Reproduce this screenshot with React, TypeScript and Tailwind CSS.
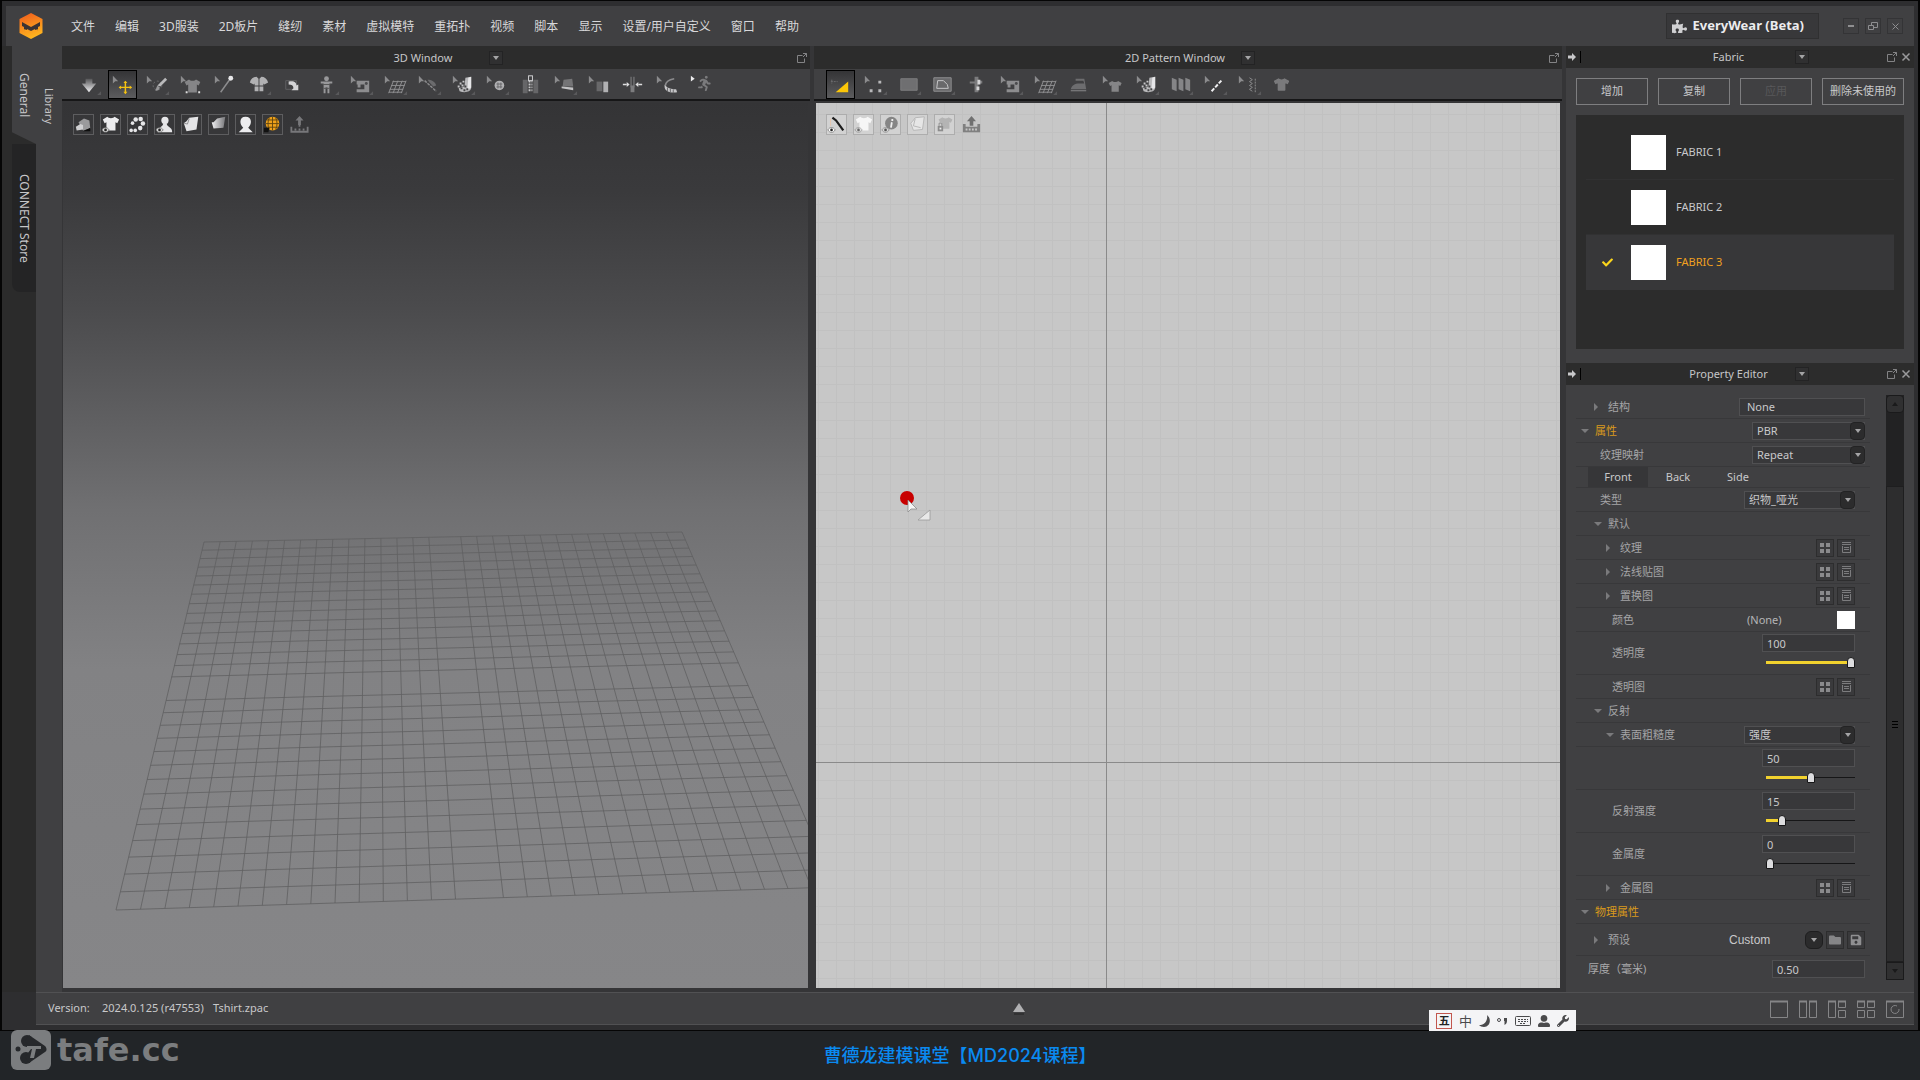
import React, { useState } from "react";
import { FaRunning, FaFolder, FaSave, FaUserAlt, FaWrench, FaCheck, FaPuzzlePiece, FaTshirt } from "react-icons/fa";

/* ---------- shared glyph parts ---------- */

const Cursor = ({ fill = "#8b8b8d" }: { fill?: string }) => <path d="M4 5v8l2.500-2.500h3z" fill={fill} />;
const Corner = () => <path d="M27 21v4h-4z" fill="#59595b" />;
const SHIRT = "M5 3L0 6l2 4 2-1v9h10V9l2 1 2-4-5-3c-1 2-7 2-8 0z";

const Machine = () => (
  <g fill="#8d8d8f">
    <path d="M10 10h13v12H10v-3h8v-5h-4v3h-3v-3h-1z" />
    <circle cx="20" cy="13" r="1.500" fill="#4a4a4c" />
  </g>
);
const Mesh = () => (
  <path d="M12 11h14M10.500 15h14M9 19h14M8 22h14M13 10L8 23M17.500 10l-5 13M22 10l-5 13M26 10l-5 13" stroke="#8f8f91" strokeWidth="1" fill="none" />
);
const Boot = () => (
  <g>
    <path d="M17 7l6-1v12c-1 4-7 5-12 3l-1-3 6-2z" fill="#b9b9bb" />
    <path d="M20 7l3-1v11l-4 3z" fill="#e6e6e8" />
    <path d="M11 12h2v2h-2zM14 10h2v2h-2zM13 14h2v2h-2zM9 15h2v2H9z" fill="#c6c6c8" />
    <path d="M12 17h2v2h-2zM15 19h2v2h-2zM16 15h2v2h-2zM18 18h2v2h-2z" fill="#444446" />
  </g>
);

const icons3D: { name: string; art: React.ReactNode }[] = [
  { name: "Simulate", art: <><path d="M11 8h7v5h4l-7.500 9L7 13h4z" fill="url(#fadeUp)" /><Corner /></> },
  { name: "Select/Move", art: <><Cursor /><path d="M17 11v12M11 17h12" stroke="#f5c211" strokeWidth="1.500" /><path d="M17 10l2 2.500h-4zM17 24l2-2.500h-4zM10 17l2.500-2v4zM24 17l-2.500-2v4z" fill="#f5c211" /></> },
  { name: "Brush select", art: <><Cursor /><circle cx="15" cy="15" r="4.500" fill="none" stroke="#707072" strokeDasharray="2 2" /><path d="M23 7l2 2-7 7-3-1z" fill="#b9b9bb" /><path d="M15 15l2.500 2c-1 3-3 4-5 3 1.500-1 1-3 2.500-5z" fill="#98989a" /><Corner /></> },
  { name: "Move garment", art: <><Cursor /><g transform="translate(8 6) scale(.9)"><path d={SHIRT} fill="#858587" /></g><path d="M9 21h2v2H9zM22 21h2v2h-2z" fill="#ddd" /></> },
  { name: "Pin", art: <><Cursor /><path d="M10 22L20 8" stroke="#8d8d8f" strokeWidth="1.500" /><circle cx="20.500" cy="7.500" r="2.500" fill="#e8e8ea" /></> },
  { name: "Arrange", art: <><path d="M12 6c-3 0-6 2-7 6l4 2 1-1v2h4V8zM17 6c3 0 6 2 7 6l-4 2-1-1v2h-4V8zM10 16h4v5h-4zM15 16h4v5h-4z" fill="#b1b1b3" /><Corner /></> },
  { name: "Fold", art: <><path d="M7 10h11v9H7z" fill="none" stroke="#616163" /><path d="M10 11c6-1 8 1 8 4l2-1v6h-7l2-2c0-3-2-4-5-4z" fill="#d4d4d6" /></> },
  { name: "Avatar", art: <><circle cx="14" cy="8" r="2.500" fill="#98989a" /><path d="M8 11h12v2h-3v10h-2v-6h-2v6h-2V13H8z" fill="#98989a" /><path d="M10 14h8M11 18h6" stroke="#555" /><Corner /></> },
  { name: "Sewing", art: <><Cursor /><Machine /><Corner /></> },
  { name: "Mesh", art: <><Cursor /><Mesh /><Corner /></> },
  { name: "Stitch", art: <><Cursor /><path d="M10 10l12 11" stroke="#8a8a8c" strokeWidth="1.500" strokeDasharray="3 1" /><path d="M13 9c4 0 8 2 9 6l-3 1-4-4z" fill="#6b6b6d" /><Corner /></> },
  { name: "Texture", art: <><Cursor /><Boot /><Corner /></> },
  { name: "Button", art: <><Cursor /><circle cx="17" cy="15" r="5" fill="#b1b1b3" /><path d="M15.500 12v6M18.500 12v6M14 13.500h6M14 16.500h6" stroke="#6a6a6c" /><Corner /></> },
  { name: "Zipper", art: <><path d="M6 9h5v14H6zM17 9h5v14h-5z" fill="#666668" /><path d="M12 11h4M12 14h4M12 17h4M12 20h4" stroke="#c6c6c8" strokeDasharray="2 1" strokeWidth="2" /><rect x="12" y="5" width="4" height="5" fill="none" stroke="#d4d4d6" /></> },
  { name: "Pleat", art: <><Cursor /><path d="M13 9l9-1 1 8H12z" fill="#747476" /><path d="M11 16l12 1v3l-12-2z" fill="#c2c2c4" /><Corner /></> },
  { name: "Layers", art: <><Cursor /><path d="M12 11h6v10h-6z" fill="#68686a" /><path d="M19 11h5v11h-5z" fill="#b1b1b3" /></> },
  { name: "Measure", art: <><path d="M4 14h4M24 14h-4" stroke="#dededf" strokeWidth="1.500" /><path d="M11 14l-3-2.500v5zM17 14l3-2.500v5z" fill="#dededf" /><path d="M12.500 6v11M15.500 6v11" stroke="#858587" /><path d="M12 15h4v7h-4z" fill="#7c7c7e" /></> },
  { name: "Tape", art: <><Cursor /><path d="M22 8c-6 1-9 3-9 7" stroke="#8b8b8d" strokeWidth="1.500" fill="none" /><path d="M12 14c3 4 7 5 12 5l1 3c-7 1-13-1-13-6z" fill="#c6c6c8" /><path d="M15 17v4M18 18v4M21 19v4" stroke="#68686a" /></> },
  { name: "Walk", art: <><path d="M4 5v6l4-3z" fill="#ededef" /><FaRunning x="10" y="5" width="19" height="19" color="#7a7a7c" /></> },
];

const icons2D: { name: string; art: React.ReactNode }[] = [
  { name: "Transform pattern", art: <><path d="M4 11h7M5 9v4" stroke="#6d6d6f" strokeDasharray="2 1" /><path d="M22 11v11H9z" fill="#fbc608" /></> },
  { name: "Edit pattern", art: <><Cursor /><path d="M9 19h3v3H9zM18 19h3v3h-3zM18 10h3v3h-3z" fill="#b8b8ba" /><Corner /></> },
  { name: "Polygon", art: <><path d="M6 8h17v12H6z" fill="#6f6f71" stroke="#7c7c7e" /><Corner /></> },
  { name: "Internal shape", art: <><path d="M5 7h18v14H5z" fill="#69696b" stroke="#8f8f91" /><path d="M9 10h6l4 4 1 4H8z" fill="none" stroke="#c8c8ca" /><Corner /></> },
  { name: "Trace", art: <><path d="M12 6h4v4h4v3h-4v9h-4v-9H7v-2h5z" fill="#7a7a7c" /><path d="M15 9h3v5h-3zM14 16h3v4h-3z" fill="#d5d5d7" /></> },
  { name: "Sewing", art: <><Cursor /><Machine /><Corner /></> },
  { name: "Mesh", art: <><Cursor /><Mesh /><Corner /></> },
  { name: "Iron", art: <><path d="M6 19c1-4 4-6 9-6h5l-1-3h-8V8h9l2 11z" fill="#6d6d6f" /><path d="M6 20h16v1H6z" fill="#8b8b8d" /></> },
  { name: "Garment", art: <><Cursor /><g transform="translate(10 8) scale(.75)"><path d={SHIRT} fill="#858587" /></g></> },
  { name: "Texture", art: <><Cursor /><Boot /><Corner /></> },
  { name: "Pleats", art: <><path d="M5 7l5 2v12l-5-2zM12 7l5 2v12l-5-2zM19 7l5 2v12l-5-2z" fill="#858587" /><Corner /></> },
  { name: "Seam line", art: <><Cursor /><path d="M11 21L22 9" stroke="#f0f0f2" strokeWidth="2" strokeDasharray="4 1.500" /><Corner /></> },
  { name: "Puckering", art: <><Cursor /><path d="M15 7l3 2-3 2 3 2-3 2 3 2-3 2 3 2" fill="none" stroke="#8b8b8d" /><path d="M21 8v14" stroke="#8b8b8d" strokeDasharray="2 1" /><Corner /></> },
  { name: "Show garment", art: <FaTshirt x="5" y="6" width="19" height="17" color="#7a7a7c" /> },
];

const Eye = ({ fill = "#d8d8d8" }: { fill?: string }) => (
  <g><path d="M1 16.500c2-3.500 6-3.500 8 0-2 3.500-6 3.500-8 0z" fill={fill} stroke="#444" strokeWidth=".6" /><circle cx="5" cy="16.500" r="1.500" fill="#222" /></g>
);
const Dish = ({ fill }: { fill: string }) => (
  <path d="M1.500 13v5.500h18V13M5 16h2M9.500 16h2M14 16h2M10.500 13V6" fill="none" stroke={fill} strokeWidth="2" />
);

const view3D: { name: string; art: React.ReactNode; bare?: boolean }[] = [
  { name: "Surface", art: <><path d="M5 8l6-4 6 2 1 9-8 2z" fill="#9a9a9c" /><path d="M2 13l5-3 3 1v5l-7 1z" fill="#d0d0d2" /><path d="M10 18l8-4v4z" fill="#0d0d0d" /></> },
  { name: "Garment", art: <><g transform="translate(2 -1)"><path d={SHIRT} fill="#ececee" /></g><Eye /></> },
  { name: "Points", art: <g fill="#e6e6e8"><circle cx="8.500" cy="5" r="2.500" /><circle cx="14" cy="4.500" r="2.500" /><circle cx="16.500" cy="9.500" r="2.500" /><circle cx="13.500" cy="14.500" r="2.500" /><circle cx="5" cy="9" r="2" /><circle cx="8" cy="17" r="2" /><circle cx="3.500" cy="17" r="2" /></g> },
  { name: "Avatar", art: <><circle cx="11" cy="6" r="4" fill="#e6e6e8" /><path d="M3 19c0-6 5-5 6-9h4c1 4 6 3 6 9z" fill="#e6e6e8" /><Eye /></> },
  { name: "Texture", art: <><path d="M5 7l3-4 10-1-2 14-11 2-3-9z" fill="#e4e4e6" /><path d="M2 9l4 1 2-6" stroke="#8a8a8c" fill="none" /></> },
  { name: "Thickness", art: <path d="M5 8l4-4 9-2-2 12-11 1-2-7z" fill="url(#fadeRight)" /> },
  { name: "Head", art: <path d="M10.500 2c8 0 7 9 3 12l5 5H3l5-5c-4-3-5-12 2.500-12z" fill="#ececee" /> },
  { name: "Wire", art: <><circle cx="10.500" cy="9.500" r="7.500" fill="#f0a21a" /><path d="M3 9.500h15M4.500 5.500h12M4.500 13.500h12M10.500 2v15M7 3c-2 4-2 9 0 13M14 3c2 4 2 9 0 13" stroke="#5d4410" fill="none" /><path d="M1 14h6l-1 5H1z" fill="#111" /></> },
  { name: "Snapshot", bare: true, art: <><Dish fill="#77777a" /><path d="M10.500 1l4.500 5h-3v5H9V6H6z" fill="#77777a" /></> },
];
const view2D: { name: string; art: React.ReactNode; bare?: boolean }[] = [
  { name: "Seam", art: <><path d="M6 3l4 3 8 11" stroke="#1c1c1c" strokeWidth="2.500" fill="none" /><path d="M4 4v8" stroke="#e8c4a8" /><Eye fill="#fff" /></> },
  { name: "Garment", art: <><g transform="translate(2 -1)"><path d={SHIRT} fill="#f6f6f6" /></g><g opacity=".6"><Eye /></g></> },
  { name: "Info", art: <><circle cx="11.500" cy="9" r="7" fill="#858585" /><path d="M12 8l-1 6M12.500 4.500v2" stroke="#eee" strokeWidth="2" /><g opacity=".7"><Eye /></g></> },
  { name: "Texture", art: <><path d="M5 7l3-4 10-1-2 14-10 1-3-8z" fill="#e6e6e6" stroke="#b4b4b4" /><path d="M8 4l-2 8 8 2" stroke="#b4b4b4" fill="none" /></> },
  { name: "Lock", art: <><g transform="translate(4 0) scale(.85)"><path d={SHIRT} fill="#b4b4b4" /></g><path d="M3 12h6v6H3z" fill="#8c8c8c" /><path d="M4.500 12V9h3v3" stroke="#8c8c8c" fill="none" /><path d="M5 14h2v2H5z" fill="#eee" /></> },
  { name: "Snapshot", bare: true, art: <><path d="M1 10h3v3h13v-3h3v9H1z" fill="#808080" /><path d="M4 16h13" stroke="#c6c6c6" strokeDasharray="2 1.500" strokeWidth="2" /><path d="M10.500 1l5 6h-3v5h-4V7h-3z" fill="#707070" /></> },
];

/* ---------- small controls ---------- */

const TriDown = () => <svg className="h-1 w-[6px]" viewBox="0 0 6 4"><path d="M0 0h6L3 4z" fill="#a4a4a6" /></svg>;
const TriRight = () => <svg className="h-2 w-[6px]" viewBox="0 0 6 8"><path d="M0 0l4 4-4 4z" fill="#7a7a7c" /></svg>;
const PopOut = () => (
  <svg className="size-[10px]" viewBox="0 0 10 10" fill="none" stroke="#838385"><path d="M5.500 2.500h-5v7h7v-4" /><path d="M6 .5h3.500V4M9.500.5L6 4" /></svg>
);
const Cross = () => <svg className="size-[10px]" viewBox="0 0 10 10"><path d="M1.500 1.500l7 7M8.500 1.500l-7 7" stroke="#9a9a9c" strokeWidth="1.500" /></svg>;

function TitleBar({ title, dock }: { title: string; dock?: boolean }) {
  return (
    <div className={dock ? "relative flex h-full items-center justify-center bg-[#2c2c2c] pl-[3px]" : "relative flex h-full items-center justify-center bg-[#2c2c2c]"}>
      {dock && (
        <span className="absolute left-0.5 flex items-center gap-1">
          <svg className="h-2 w-2" viewBox="0 0 8 8"><path d="M0 2.500h4V0l4 4-4 4V5.500H0z" fill="#c9c9cb" /></svg>
          <i className="h-3 w-px bg-black" />
        </span>
      )}
      <div className="flex items-center gap-3">
        <h2 className="w-[108px] text-center text-[11px] leading-4 text-[#c6c6c8]">{title}</h2>
        <button aria-label={`${title} menu`} className="flex size-[14px] items-center justify-center border border-[#232324] bg-[#303031]"><TriDown /></button>
      </div>
      <span className="absolute right-[3px] flex gap-1">
        <button aria-label="Undock"><PopOut /></button>
        {dock && <button aria-label="Close"><Cross /></button>}
      </span>
    </div>
  );
}

function ToolStrip({ items, active }: { items: { name: string; art: React.ReactNode }[]; active: number }) {
  return (
    <div className="flex h-8 items-start border-b-2 border-[#161617] bg-[#404042] pl-[9px] pt-px">
      {items.map((it, i) => (
        <div key={it.name} className="flex w-[34px] justify-center">
          <button aria-label={it.name} className={i === active ? "size-[29px] border border-black bg-linear-to-b from-[#343436] to-[#5c5c5e]" : "size-[29px] border border-transparent"}>
            <svg viewBox="0 0 28 28" className="size-[27px]">{it.art}</svg>
          </button>
        </div>
      ))}
    </div>
  );
}

function ViewStrip({ items, light }: { items: { name: string; art: React.ReactNode; bare?: boolean }[]; light?: boolean }) {
  return (
    <div className="relative flex gap-[6px] pl-[10px] pt-[11px]">
      {items.map((it) => (
        <button key={it.name} aria-label={it.name} className={it.bare ? "size-[21px] border border-transparent" : light ? "size-[21px] border border-[#adadad] bg-[#d2d2d2]" : "size-[21px] border border-[#5d5d5f] bg-[#373739]"}>
          <svg viewBox="0 0 21 21" className="size-[19px]">{it.art}</svg>
        </button>
      ))}
    </div>
  );
}

/* ---------- floor grid of the 3D view ---------- */

function floorLines() {
  const [x0, y0] = [141, 439], [x1, y1] = [619, 429], [x2, y2] = [772, 784], [x3, y3] = [53, 807];
  const dx1 = x1 - x2, dx2 = x3 - x2, sx = x0 - x1 + x2 - x3;
  const dy1 = y1 - y2, dy2 = y3 - y2, sy = y0 - y1 + y2 - y3;
  const det = dx1 * dy2 - dx2 * dy1;
  const g = (sx * dy2 - dx2 * sy) / det, h = (dx1 * sy - sx * dy1) / det;
  const at = (u: number, v: number) => {
    const w = g * u + h * v + 1;
    const x = ((x1 - x0 + g * x1) * u + (x3 - x0 + h * x3) * v + x0) / w;
    const y = ((y1 - y0 + g * y1) * u + (y3 - y0 + h * y3) * v + y0) / w;
    return `${x.toFixed(1)} ${y.toFixed(1)}`;
  };
  let d = "";
  for (let i = 0; i <= 30; i++) {
    if (i === 15) continue;
    const t = i / 30;
    d += `M${at(t, 0)}L${at(t, 1)}M${at(0, t)}L${at(1, t)}`;
  }
  return d;
}

/* ---------- property editor ---------- */

const FIELD = "h-[18px] border border-[#505052] bg-[#38383a] text-[11px] leading-4 text-[#c8c8ca] outline-none";

function Row({ label, pad, arrow, gold, h = "h-6", inner, children }: { label: string; pad: string; arrow?: "open" | "closed"; gold?: boolean; h?: string; inner?: boolean; children?: React.ReactNode }) {
  return (
    <div className={`flex items-center border-b border-[#38383a] ${h} ${pad} ${inner ? "pr-[15px]" : "pr-[5px]"}`}>
      {arrow && <span className="flex w-[14px] shrink-0">{arrow === "open" ? <svg className="h-1 w-2" viewBox="0 0 8 4"><path d="M0 0h8L4 4z" fill="#7a7a7c" /></svg> : <TriRight />}</span>}
      <span className={gold ? "text-[#d99a1c]" : "text-[#a4a4a6]"}>{label}</span>
      <div className="ml-auto flex items-center">{children}</div>
    </div>
  );
}

function Drop({ label, value, w }: { label: string; value: string; w: string }) {
  return (
    <div className={`relative flex ${w}`}>
      <select aria-label={label} className={`${FIELD} w-full appearance-none pl-1`} defaultValue={value}><option>{value}</option></select>
      <span className="pointer-events-none absolute right-0 top-0 flex h-[18px] w-[15px] items-center justify-center rounded-sm border border-[#232324] bg-[#2c2c2d]"><TriDown /></span>
    </div>
  );
}

function MapButtons() {
  return (
    <div className="flex gap-[3px]">
      <button aria-label="Library" className="flex size-[18px] items-center justify-center border border-[#2d2d2e] bg-[#3a3a3c]">
        <svg className="size-[10px]" viewBox="0 0 10 10" fill="#8a8a8c"><path d="M0 0h4v4H0zM6 0h4v4H6zM0 6h4v4H0zM6 6h4v4H6z" /></svg>
      </button>
      <button aria-label="Delete" className="flex size-[18px] items-center justify-center border border-[#2d2d2e] bg-[#3a3a3c]">
        <svg className="size-[11px]" viewBox="0 0 11 11" fill="none" stroke="#7c7c7e"><path d="M1 .5h9M1 2.500h9M1.500 4v6.500h8V4M3 5.500h5M3 7.500h5" /></svg>
      </button>
    </div>
  );
}

function Amount({ label, start }: { label: string; start: number }) {
  const [v, setV] = useState(start);
  return (
    <div className="flex w-[93px] flex-col">
      <input aria-label={label} value={v} onChange={(e) => setV(Number(e.target.value) || 0)} className={`${FIELD} w-full px-1`} />
      <div className="relative ml-1 flex h-5 items-center">
        <i className="absolute inset-x-0 h-px bg-[#161617]" />
        <i className="absolute left-0 h-[3px] bg-[#f2d22e]" style={{ width: `${v * 0.92}%` }} />
        <input type="range" aria-label={`${label} slider`} min={0} max={100} value={v} onChange={(e) => setV(Number(e.target.value))}
          className="relative h-3 w-full appearance-none bg-transparent [&::-webkit-slider-thumb]:h-[11px] [&::-webkit-slider-thumb]:w-2 [&::-webkit-slider-thumb]:appearance-none [&::-webkit-slider-thumb]:rounded-t-full [&::-webkit-slider-thumb]:border [&::-webkit-slider-thumb]:border-[#161617] [&::-webkit-slider-thumb]:bg-[#dcdcde]" />
      </div>
    </div>
  );
}

function PropertyEditor() {
  return (
    <div className="flex min-h-0 flex-1 justify-between bg-[#404042] pb-3 pl-[10px] pr-[10px] pt-[10px]">
      <div className="w-[294px] text-[11px] leading-4">
        <Row label="结构" pad="pl-[18px]" arrow="closed"><input aria-label="结构" defaultValue="None" className={`${FIELD} w-[126px] px-[7px]`} /></Row>
        <Row label="属性" pad="pl-[5px]" arrow="open" gold><Drop label="属性" value="PBR" w="w-[113px]" /></Row>
        <Row label="纹理映射" pad="pl-6"><Drop label="纹理映射" value="Repeat" w="w-[113px]" /></Row>
        <div role="tablist" className="flex h-[21px] border-b border-[#38383a] pl-3 text-[#c8c8ca]">
          <button role="tab" aria-selected="true" className="w-[60px] bg-[#363638]">Front</button>
          <button role="tab" className="w-[60px]">Back</button>
          <button role="tab" className="w-[60px]">Side</button>
        </div>
        <Row label="类型" pad="pl-6" inner><Drop label="类型" value="织物_哑光" w="w-[111px]" /></Row>
        <Row label="默认" pad="pl-[18px]" arrow="open" />
        <Row label="纹理" pad="pl-[30px]" arrow="closed" inner><MapButtons /></Row>
        <Row label="法线贴图" pad="pl-[30px]" arrow="closed" inner><MapButtons /></Row>
        <Row label="置换图" pad="pl-[30px]" arrow="closed" inner><MapButtons /></Row>
        <Row label="颜色" pad="pl-9" inner>
          <span className="w-[90px] text-[#b4b4b6]">(None)</span>
          <button aria-label="颜色" className="size-[18px] bg-white" />
        </Row>
        <Row label="透明度" pad="pl-9" h="h-[43px]" inner><Amount label="透明度" start={100} /></Row>
        <Row label="透明图" pad="pl-9" inner><MapButtons /></Row>
        <Row label="反射" pad="pl-[18px]" arrow="open" />
        <Row label="表面粗糙度" pad="pl-[30px]" arrow="open" inner><Drop label="表面粗糙度" value="强度" w="w-[111px]" /></Row>
        <Row label="" pad="pl-9" h="h-[43px]" inner><Amount label="强度" start={50} /></Row>
        <Row label="反射强度" pad="pl-9" h="h-[43px]" inner><Amount label="反射强度" start={15} /></Row>
        <Row label="金属度" pad="pl-9" h="h-[43px]" inner><Amount label="金属度" start={0} /></Row>
        <Row label="金属图" pad="pl-[30px]" arrow="closed" inner><MapButtons /></Row>
        <Row label="物理属性" pad="pl-[5px]" arrow="open" gold />
        <Row label="预设" pad="pl-[18px]" arrow="closed" h="h-8">
          <span className="w-[76px] font-['Liberation_Sans'] text-xs text-[#c8c8ca]">Custom</span>
          <div className="flex gap-[3px]">
            <button aria-label="Preset list" className="flex size-[18px] items-center justify-center rounded-md border border-[#1e1e1f] bg-[#2b2b2c]"><TriDown /></button>
            <button aria-label="Open preset" className="flex size-[18px] items-center justify-center border border-[#2d2d2e] bg-[#3a3a3c]"><FaFolder size={12} color="#858587" /></button>
            <button aria-label="Save preset" className="flex size-[18px] items-center justify-center border border-[#2d2d2e] bg-[#3a3a3c]"><FaSave size={12} color="#8f8f91" /></button>
          </div>
        </Row>
        <div className="flex h-[26px] items-center justify-between pl-3 pr-[5px]">
          <label htmlFor="thick" className="text-[#a9a9ab]">厚度（毫米)</label>
          <input id="thick" defaultValue="0.50" className={`${FIELD} w-[93px] px-1`} />
        </div>
      </div>
      <div className="flex w-[18px] flex-col bg-[#222223]" aria-hidden="true">
        <span className="flex h-[18px] items-center justify-center rounded border border-[#1a1a1b] bg-[#303031]"><svg className="h-1 w-[6px]" viewBox="0 0 6 4"><path d="M0 4h6L3 0z" fill="#1a1a1b" /></svg></span>
        <span className="basis-[73px]" />
        <span className="flex flex-1 flex-col items-center justify-center gap-0.5 border border-[#1e1e1f] bg-[#2d2d2e]">
          <i className="h-px w-[6px] bg-black" /><i className="h-px w-[6px] bg-black" /><i className="h-px w-[6px] bg-black" />
        </span>
        <span className="flex h-[18px] items-center justify-center border border-[#1a1a1b] bg-[#303031]"><svg className="h-1 w-[6px]" viewBox="0 0 6 4"><path d="M0 0h6L3 4z" fill="#1a1a1b" /></svg></span>
      </div>
    </div>
  );
}

/* ---------- page ---------- */

const menus = ["文件", "编辑", "3D服装", "2D板片", "缝纫", "素材", "虚拟模特", "重拓扑", "视频", "脚本", "显示", "设置/用户自定义", "窗口", "帮助"];
const fabricButtons = ["增加", "复制", "应用", "删除未使用的"];
const fabrics = ["FABRIC 1", "FABRIC 2", "FABRIC 3"];
const layouts = ["M.5 1.500h17v16H.5z", "M.5 1.500h7v16h-7zM10.500 1.500h7v16h-7z", "M.5 1.500h7v16h-7zM10.500 1.500h7v6h-7zM10.500 10.500h7v7h-7z", "M.5 1.500h7v6h-7zM10.500 1.500h7v6h-7zM.5 10.500h7v7h-7zM10.500 10.500h7v7h-7z", "M.5 1.500h17v16H.5zM13 9a4 4 0 1 1-2-3"];

export default function App() {
  return (
    <div className="relative flex h-screen flex-col overflow-hidden bg-[#222528] font-['Noto_Sans','Noto_Sans_CJK_SC',sans-serif] text-[#c8c8ca]">
      <svg className="absolute size-0" aria-hidden="true">
        <defs>
          <linearGradient id="fadeUp" x1="0" y1="0" x2="0" y2="1"><stop offset="0" stopColor="#555557" /><stop offset="1" stopColor="#f0f0f2" /></linearGradient>
          <linearGradient id="fadeRight" x1="0" y1="0" x2="1" y2="0"><stop offset="0" stopColor="#f0f0f2" /><stop offset="1" stopColor="#77777a" /></linearGradient>
        </defs>
      </svg>

      <div className="flex min-h-0 flex-1 flex-col border-x-2 border-y border-[#050505] bg-[#2e2e30]">
        <header className="mx-1 mt-[5px] flex h-10 shrink-0 items-center bg-[#404042] pl-[13px] pr-[11px]">
          <svg viewBox="0 0 24 26" className="h-[26px] w-6" role="img" aria-label="Marvelous Designer">
            <defs><linearGradient id="hex" x1="0" y1="0" x2=".3" y2="1"><stop offset="0" stopColor="#ef5a1d" /><stop offset="1" stopColor="#ffb41f" /></linearGradient></defs>
            <path d="M12 0l11.500 6v14L12 26 .5 20V6z" fill="url(#hex)" />
            <path d="M3 9l9 5 9-5v4l-2 1v4h-3v-2l-4 2-4-2v2H5v-4l-2-1z" fill="#3b3334" />
            <path d="M5 17l4 1M19 17l-4 1" stroke="#ffa51f" strokeWidth="1.500" />
          </svg>
          <nav className="ml-7 flex gap-5 pt-0.5 text-xs text-[#d8d8da]">
            {menus.map((m) => <button key={m} className="whitespace-nowrap">{m}</button>)}
          </nav>
          <div className="ml-auto flex items-center">
            <button className="flex h-[26px] items-center gap-[6px] border border-[#303031] bg-[#38383a] pl-[5px] pr-[14px] text-[13px] font-bold text-[#ececee]">
              <FaPuzzlePiece size={15} color="#d0d0d2" />EveryWear (Beta)
            </button>
            <div className="ml-6 flex gap-[6px]">
              <button aria-label="Minimize" className="flex size-4 items-center justify-center border border-[#343436]"><i className="h-0.5 w-[6px] bg-[#8f8f91]" /></button>
              <button aria-label="Restore" className="flex size-4 items-center justify-center border border-[#343436]"><svg className="size-[10px]" viewBox="0 0 10 10" fill="none" stroke="#8f8f91"><path d="M.5 4.500h5v4h-5zM3.500 4V1.500h6v5H6" /></svg></button>
              <button aria-label="Close window" className="flex size-4 items-center justify-center border border-[#343436]"><svg className="size-[7px]" viewBox="0 0 7 7"><path d="M.5.5l6 6M6.500.5l-6 6" stroke="#8f8f91" /></svg></button>
            </div>
          </div>
        </header>

        <main className="flex min-h-0 flex-1">
          <aside className="flex w-[60px] shrink-0 bg-[#2b2b2b] text-[#c6c6c8]">
            <div className="flex w-[34px] flex-col pl-[10px]">
              <button className="h-[98px] w-6 bg-[#404042] text-xs leading-6 [clip-path:polygon(0_0,100%_0,100%_100%,0_88%)] [writing-mode:vertical-rl]">General</button>
              <button className="h-[148px] w-6 rounded-bl-lg bg-[#242425] text-xs leading-6 [writing-mode:vertical-rl]">CONNECT Store</button>
            </div>
            <div className="flex w-[26px] justify-center bg-[#404042] pt-[42px]">
              <button className="h-9 text-[11px] leading-6 [writing-mode:vertical-rl]">Library</button>
            </div>
          </aside>

          <div className="flex min-w-0 flex-1 flex-col bg-[#353537]">
            <div className="flex min-h-0 flex-1">
              <section className="flex min-w-0 flex-1 flex-col pr-1">
                <div className="h-[23px] shrink-0"><TitleBar title="3D Window" /></div>
                <ToolStrip items={icons3D} active={1} />
                <div className="relative ml-px mr-0.5 mt-0.5 flex-1 overflow-hidden bg-[linear-gradient(#343436,#3a3a3c_10%,#4c4c4e_24%,#707072_46%,#828284_64%,#868688)]">
                  <svg className="absolute inset-0 size-full" aria-hidden="true"><path d={floorLines()} fill="none" stroke="#606062" strokeWidth="1" opacity=".8" /></svg>
                  <ViewStrip items={view3D} />
                </div>
              </section>
              <section className="flex min-w-0 flex-1 flex-col pr-1">
                <div className="h-[23px] shrink-0"><TitleBar title="2D Pattern Window" /></div>
                <ToolStrip items={icons2D} active={0} />
                <div className="relative ml-0.5 mr-0.5 mt-0.5 flex-1 overflow-hidden bg-[#c7c7c7] bg-[linear-gradient(90deg,#c1c1c1_1px,transparent_1px),linear-gradient(#c1c1c1_1px,transparent_1px)] bg-[size:18px_18px] bg-[position:2px_11px]">
                  <i className="absolute inset-y-0 left-[39%] w-px bg-[#8a8a8a]" />
                  <i className="absolute inset-x-0 top-[74.5%] h-px bg-[#8a8a8a]" />
                  <svg className="absolute left-[84px] top-[387px] h-9 w-10" viewBox="0 0 40 36" aria-hidden="true">
                    <circle cx="7" cy="8" r="7" fill="#c80000" />
                    <path d="M8 10v12l3-3h6z" fill="#f4f4f4" stroke="#8a8a8a" strokeWidth=".8" />
                    <path d="M18 30l12-10v10z" fill="#e8e8e8" stroke="#9a9a9a" strokeWidth=".8" />
                  </svg>
                  <ViewStrip items={view2D} light />
                </div>
              </section>
            </div>
            <div className="h-1 shrink-0" />
          </div>

          <aside className="mr-1 flex w-[348px] shrink-0 flex-col">
            <div className="h-[22px] shrink-0"><TitleBar title="Fabric" dock /></div>
            <div className="h-[295px] shrink-0 bg-[#404042] px-[10px] pt-[10px]">
              <div className="flex gap-[10px] text-[11px]">
                {fabricButtons.map((b, i) => (
                  <button key={b} disabled={i === 2} className={i === 3 ? "h-[27px] w-[82px] whitespace-nowrap border border-[#7e7e80]" : i === 2 ? "h-[27px] flex-1 border border-[#7e7e80] text-[#58585a]" : "h-[27px] flex-1 border border-[#7e7e80]"}>{b}</button>
                ))}
              </div>
              <ul className="mt-[10px] h-[234px] bg-[#2c2c2c] px-[10px] pt-[10px]">
                {fabrics.map((f, i) => (
                  <li key={f}>
                    <button aria-pressed={i === 2} className={i === 2 ? "flex h-[55px] w-full items-center bg-[#373739] text-[11px] text-[#f0a020]" : "flex h-[55px] w-full items-center border-b border-[#313132] text-[11px]"}>
                      <span className="flex w-[45px] justify-center pr-0.5">{i === 2 && <FaCheck size={11} color="#fbd51c" />}</span>
                      <span className="size-[35px] bg-white" />
                      <span className="ml-[10px]">{f}</span>
                    </button>
                  </li>
                ))}
              </ul>
            </div>
            <div className="h-[22px] shrink-0"><TitleBar title="Property Editor" dock /></div>
            <PropertyEditor />
          </aside>
        </main>

        <div className="mb-[5px] ml-[34px] mr-1 flex h-[33px] shrink-0 items-center border-y border-[#515153] bg-[#404042] pl-3 pr-[10px] text-[11px]">
          <span className="w-[54px]">Version:</span>
          <span className="w-[111px]">2024.0.125 (r47553)</span>
          <span>Tshirt.zpac</span>
          <button aria-label="Expand" className="mx-auto"><svg className="h-3 w-3" viewBox="0 0 12 12"><path d="M0 9h12L6 0z" fill="#b0b0b2" /><path d="M1 11h10" stroke="#222" /></svg></button>
          <div className="flex gap-[11px]">
            {layouts.map((d) => (
              <button key={d} aria-label="Layout"><svg className="size-[18px]" viewBox="0 0 18 18" fill="none" stroke="#858587"><path d={d} /><path d="M0 1.500h18" strokeWidth="2" strokeDasharray={d.startsWith("M.5 1.500h17") ? undefined : "8 2"} /></svg></button>
            ))}
          </div>
        </div>
      </div>

      <footer className="flex h-[49px] shrink-0 items-center justify-center font-['Inter','Noto_Sans_CJK_SC',sans-serif] text-lg font-medium text-[#0a8af0]">
        <p>曹德龙建模课堂【MD2024课程】</p>
      </footer>

      <div className="absolute bottom-[10px] left-[11px] flex items-center gap-[6px] text-[#7b7d7f]">
        <svg viewBox="0 0 40 40" className="size-10" role="img" aria-label="tafe">
          <rect width="40" height="40" rx="6" fill="#7b7d7f" />
          <circle cx="16" cy="11" r="6" fill="#26282b" /><circle cx="15" cy="28" r="6" fill="#26282b" /><circle cx="7" cy="19" r="2.500" fill="#26282b" />
          <path d="M18 5l16 11c2 2 2 5 0 6L18 33l-4-6 6-8-6-8z" fill="#26282b" />
          <path d="M16 16h14v3h-5l-2 9h-4l2-9h-5z" fill="#7b7d7f" />
        </svg>
        <span className="font-['DejaVu_Sans'] text-[32px] font-bold leading-9">tafe.cc</span>
      </div>

      <div className="absolute bottom-[49px] right-[344px] flex h-[21px] w-[147px] items-center justify-around bg-[#f4f4f6] px-1 text-[13px] leading-4 text-[#4a4a4c]">
        <span className="flex size-4 items-center justify-center border border-[#c2564e] text-[11px] font-bold text-[#222]">五</span>
        <span>中</span>
        <svg className="size-3" viewBox="0 0 12 12" fill="currentColor"><path d="M8 0c5 4 3 12-3 12-2 0-4-1-5-2 6 0 9-5 8-10z" /></svg>
        <svg className="h-2 w-[11px]" viewBox="0 0 11 8" aria-label="Punctuation"><circle cx="2" cy="3" r="1.500" fill="none" stroke="currentColor" /><path d="M7 1h3v3c0 2-1 3-2.500 4V4H7z" fill="currentColor" /></svg>
        <svg className="h-[10px] w-4" viewBox="0 0 16 10" fill="none" stroke="currentColor"><rect x=".5" y=".5" width="15" height="9" rx="1" /><path d="M3 3.500h10M3 5.500h10M5 7.500h6" strokeDasharray="2 1" /></svg>
        <FaUserAlt size={12} />
        <FaWrench size={12} />
      </div>
    </div>
  );
}
